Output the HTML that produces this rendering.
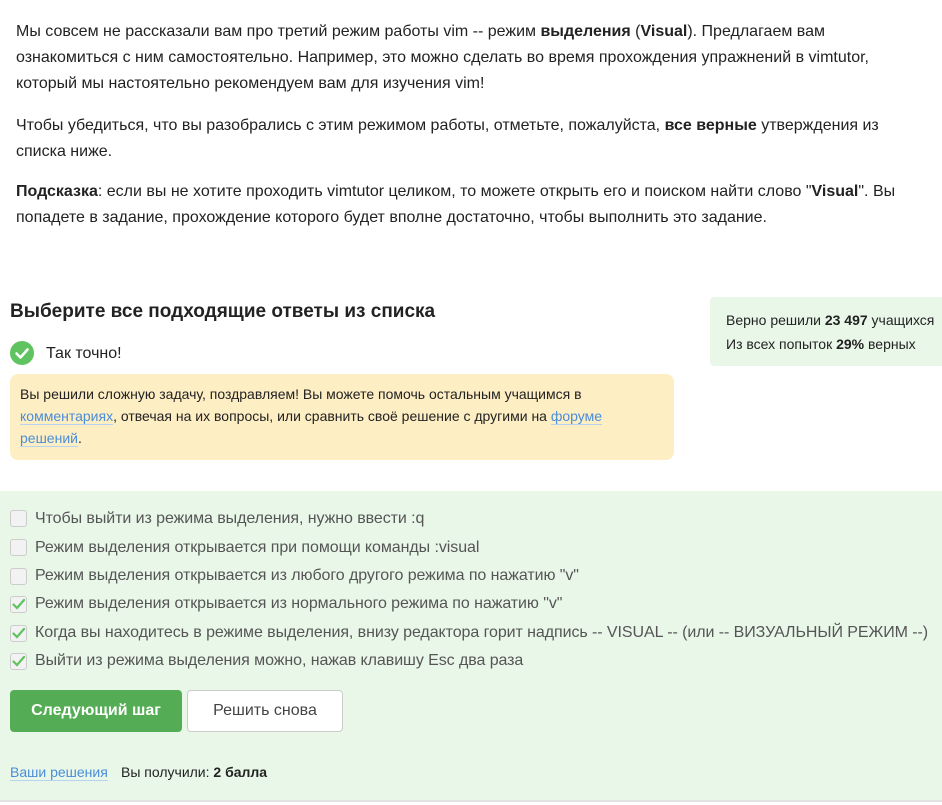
<!DOCTYPE html>
<html><head><meta charset="utf-8"><style>
*{margin:0;padding:0;box-sizing:border-box}
body{width:942px;height:805px;background:#fff;font-family:"Liberation Sans",sans-serif;color:#222;position:relative;overflow:hidden}
.abs{position:absolute}
p.t{font-size:16px;line-height:26px;position:absolute;left:16px;width:900px}
a{color:#4a8dd8;text-decoration:none;border-bottom:1px solid #b8d2f0}
.cb{position:absolute;left:10px;width:17px;height:17px;border:1px solid #ccc;border-radius:3px;background:#f2f2f2}
.lbl{position:absolute;left:35px;font-size:16px;color:#555;line-height:20px;white-space:nowrap;letter-spacing:-0.07px}
</style></head><body>
<p class="t" style="top:19px">Мы совсем не рассказали вам про третий режим работы vim -- режим <b>выделения</b> (<b>Visual</b>). Предлагаем вам ознакомиться с ним самостоятельно. Например, это можно сделать во время прохождения упражнений в vimtutor, который мы настоятельно рекомендуем вам для изучения vim!</p>
<p class="t" style="top:113px">Чтобы убедиться, что вы разобрались с этим режимом работы, отметьте, пожалуйста, <b>все верные</b> утверждения из списка ниже.</p>
<p class="t" style="top:179px"><b>Подсказка</b>: если вы не хотите проходить vimtutor целиком, то можете открыть его и поиском найти слово "<b>Visual</b>". Вы попадете в задание, прохождение которого будет вполне достаточно, чтобы выполнить это задание.</p>
<div class="abs" style="left:10px;top:301px;font-size:19px;font-weight:bold;color:#222">Выберите все подходящие ответы из списка</div>
<svg class="abs" style="left:10px;top:341px" width="24" height="24"><circle cx="12" cy="12" r="12" fill="#5fc35f"/><path d="M6.5 12.5l4 4 7-8" stroke="#fff" stroke-width="2.6" fill="none" stroke-linecap="round" stroke-linejoin="round"/></svg>
<div class="abs" style="left:46px;top:345px;font-size:16px">Так точно!</div>
<div class="abs" style="left:10px;top:374px;width:664px;height:86px;background:#feeec4;border-radius:8px;padding:9px 10px;font-size:14px;line-height:22px;color:#222">Вы решили сложную задачу, поздравляем! Вы можете помочь остальным учащимся в <a>комментариях</a>, отвечая на их вопросы, или сравнить своё решение с другими на <a>форуме решений</a>.</div>
<div class="abs" style="left:710px;top:297px;width:240px;height:69px;background:#e9f7e9;border-radius:4px;padding:11px 16px;font-size:14px;line-height:24px;color:#222;white-space:nowrap">Верно решили <b>23 497</b> учащихся<br>Из всех попыток <b>29%</b> верных</div>
<div class="abs" style="left:0;top:491px;width:942px;height:309px;background:#e9f7e9"></div>
<div class="abs" style="left:0;top:800px;width:942px;height:2px;background:#e2e2e2"></div>
<div class="cb" style="top:510px"></div><div class="lbl" style="top:509px">Чтобы выйти из режима выделения, нужно ввести :q</div>
<div class="cb" style="top:539px"></div><div class="lbl" style="top:538px">Режим выделения открывается при помощи команды :visual</div>
<div class="cb" style="top:568px"></div><div class="lbl" style="top:566px">Режим выделения открывается из любого другого режима по нажатию "v"</div>
<div class="cb" style="top:596px"></div><div class="lbl" style="top:594px">Режим выделения открывается из нормального режима по нажатию "v"</div>
<div class="cb" style="top:625px"></div><div class="lbl" style="top:623px">Когда вы находитесь в режиме выделения, внизу редактора горит надпись -- VISUAL -- (или -- ВИЗУАЛЬНЫЙ РЕЖИМ --)</div>
<div class="cb" style="top:653px"></div><div class="lbl" style="top:651px">Выйти из режима выделения можно, нажав клавишу Esc два раза</div>
<svg class="abs" style="left:10px;top:596px" width="17" height="90"><g stroke="#5fc35f" stroke-width="2.2" fill="none" stroke-linecap="round"><path d="M3.5 8.5l3.5 3.5 7-8"/><path d="M3.5 37.5l3.5 3.5 7-8"/><path d="M3.5 65.5l3.5 3.5 7-8"/></g></svg>
<div class="abs" style="left:10px;top:690px;width:172px;height:42px;background:#54ad54;border-radius:4px;color:#fff;font-size:16px;font-weight:bold;line-height:42px;text-align:center">Следующий шаг</div>
<div class="abs" style="left:187px;top:690px;width:156px;height:42px;background:#fff;border:1px solid #ccc;border-radius:4px;color:#444;font-size:16px;line-height:40px;text-align:center">Решить снова</div>
<div class="abs" style="left:10px;top:764px;font-size:14px"><a>Ваши решения</a></div>
<div class="abs" style="left:121px;top:764px;font-size:14px;color:#222">Вы получили: <b>2 балла</b></div>
</body></html>
